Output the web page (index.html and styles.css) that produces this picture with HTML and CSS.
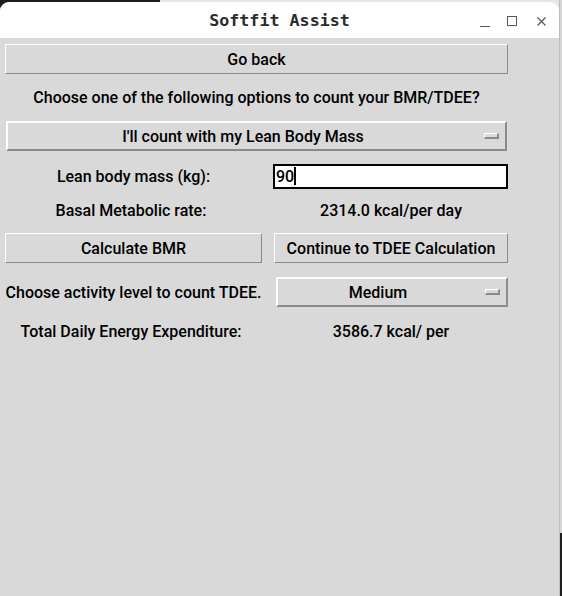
FILE: index.html
```html
<!DOCTYPE html>
<html>
<head>
<meta charset="utf-8">
<title>Softfit Assist</title>
<link rel="stylesheet" href="styles.css">
</head>
<body>
<div class="desktop">
  <div class="window">
    <div class="titlebar">
      <div class="title">Softfit Assist</div>
      <div class="controls">
        <span class="ctl-min"></span>
        <span class="ctl-max"></span>
        <svg class="ctl-close" width="9" height="9" viewBox="0 0 9 9"><path d="M0.5 0.5L8.5 8.5M8.5 0.5L0.5 8.5" stroke="#555" stroke-width="1.2" fill="none"/></svg>
      </div>
    </div>
    <div class="content">
      <div class="btn btn-wide">Go back</div>
      <div class="row-question">Choose one of the following options to count your BMR/TDEE?</div>
      <div class="menu menu-wide"><span class="menu-text">I'll count with my Lean Body Mass</span><span class="indicator"></span></div>
      <div class="cell row-entry">Lean body mass (kg):</div>
      <div class="cell row-entry"><div class="entry">90<span class="caret"></span></div></div>
      <div class="cell row-basal label-shift">Basal Metabolic rate:</div>
      <div class="cell row-basal">2314.0 kcal/per day</div>
      <div class="btn">Calculate BMR</div>
      <div class="btn">Continue to TDEE Calculation</div>
      <div class="cell row-activity">Choose activity level to count TDEE.</div>
      <div class="cell row-activity"><div class="menu menu-small"><span class="menu-text">Medium</span><span class="indicator"></span></div></div>
      <div class="cell row-total label-shift">Total Daily Energy Expenditure:</div>
      <div class="cell row-total">3586.7 kcal/ per</div>
    </div>
  </div>
  <div class="side-strip"></div>
</div>
</body>
</html>
```

FILE: styles.css
```css
html, body {
  margin: 0;
  padding: 0;
  width: 562px;
  height: 596px;
  overflow: hidden;
}
body {
  background: linear-gradient(to right, #1e1e1e 0, #1e1e1e 160px, #e6e6e6 160px);
  font-family: Roboto, "Noto Sans", sans-serif;
  font-weight: 500;
  font-size: 16px;
  color: #000;
}
.desktop {
  display: flex;
  height: 596px;
}
.window {
  width: 559px;
  margin-top: 2px;
  display: flex;
  flex-direction: column;
  background: #d9d9d9;
  border-radius: 9px 9px 0 0;
  overflow: hidden;
}
.titlebar {
  height: 36px;
  background: #ffffff;
  display: flex;
  align-items: center;
  justify-content: center;
  position: relative;
}
.title {
  font-family: "DejaVu Sans Mono", monospace;
  font-weight: bold;
  font-size: 16.7px;
  color: #2b2b2b;
}
.controls {
  position: absolute;
  right: 13px;
  top: 0;
  height: 36px;
  display: flex;
  align-items: center;
  gap: 17px;
}
.ctl-min {
  width: 10px;
  height: 1px;
  background: #555;
  margin-top: 12px;
}
.ctl-max {
  width: 8px;
  height: 8px;
  border: 1px solid #555;
  margin-top: 2px;
  margin-right: 3px;
}
.ctl-close {
  margin-top: 2px;
}
.side-strip {
  flex: 1;
  background: linear-gradient(to bottom, #d6d6d6 0, #d6d6d6 533px, #1e1e1e 533px);
  border-left: 1px solid #bdbdbd;
}
.content {
  flex: 1;
  padding: 6px 0 0 5px;
  display: grid;
  grid-template-columns: 257px 234px;
  column-gap: 12px;
  align-content: start;
}
.btn {
  height: 30px;
  box-sizing: border-box;
  border-style: solid;
  border-width: 1px;
  border-color: #ffffff #8a8a8a #8a8a8a #ffffff;
  display: flex;
  align-items: center;
  justify-content: center;
  white-space: nowrap;
}
.btn-wide {
  grid-column: 1 / -1;
}
.row-question {
  grid-column: 1 / -1;
  height: 47px;
  display: flex;
  align-items: center;
  justify-content: center;
  white-space: nowrap;
}
.menu {
  height: 30px;
  box-sizing: border-box;
  border-style: solid;
  border-width: 2px;
  border-color: #ffffff #8a8a8a #8a8a8a #ffffff;
  display: flex;
  align-items: center;
}
.menu-wide {
  grid-column: 1 / -1;
  margin-left: 1px;
  width: 501px;
}
.menu-small {
  margin-left: 1px;
  width: 232px;
}
.menu-text {
  flex: 1;
  text-align: center;
  white-space: nowrap;
}
.indicator {
  width: 15px;
  height: 6px;
  box-sizing: border-box;
  border-style: solid;
  border-width: 1px 2px 2px 1px;
  border-color: #ffffff #8a8a8a #8a8a8a #ffffff;
  margin: 0 6px 0 6px;
}
.cell {
  display: flex;
  align-items: center;
  justify-content: center;
  white-space: nowrap;
}
.label-shift {
  padding-right: 5px;
}
.row-entry {
  margin-top: 13px;
  height: 24px;
}
.entry {
  width: 236px;
  height: 25px;
  margin-left: -1px;
  box-sizing: border-box;
  background: #ffffff;
  border: 2px solid #000;
  display: flex;
  align-items: center;
  padding-left: 1px;
}
.caret {
  display: inline-block;
  width: 2px;
  height: 18px;
  background: #000;
}
.row-basal {
  height: 45px;
}
.row-activity {
  margin-top: 14px;
  height: 30px;
}
.row-activity .menu {
  flex: none;
}
.row-total {
  height: 48px;
}
```
